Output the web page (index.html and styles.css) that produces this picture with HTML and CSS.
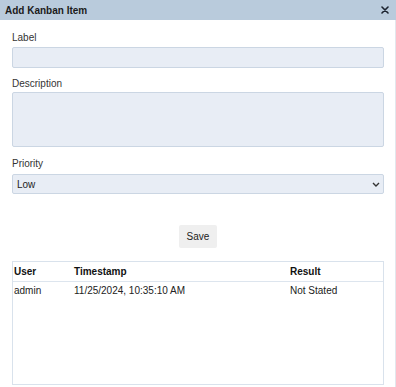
FILE: index.html
```html
<!DOCTYPE html>
<html>
<head>
<meta charset="utf-8">
<link rel="stylesheet" href="styles.css">
</head>
<body>
<div class="dialog">
  <div class="titlebar">
    <span class="title">Add Kanban Item</span>
    <svg class="close" width="8" height="8" viewBox="0 0 8 8"><path d="M1 1L7 7M7 1L1 7" stroke="#1c2430" stroke-width="1.6" stroke-linecap="round"/></svg>
  </div>
  <div class="content">
    <div class="field f-label">
      <label class="lbl">Label</label>
      <input class="ctrl input" type="text">
    </div>
    <div class="field f-desc">
      <label class="lbl">Description</label>
      <textarea class="ctrl area"></textarea>
    </div>
    <div class="field f-prio">
      <label class="lbl">Priority</label>
      <div class="select-wrap">
        <select class="ctrl select"><option>Low</option></select>
        <svg class="chev" width="8" height="5" viewBox="0 0 8 5"><path d="M1 1L4 4L7 1" fill="none" stroke="#333" stroke-width="1.4"/></svg>
      </div>
    </div>
    <div class="actions">
      <button class="save">Save</button>
    </div>
    <div class="table">
      <div class="row head">
        <div>User</div><div>Timestamp</div><div>Result</div>
      </div>
      <div class="row">
        <div>admin</div><div>11/25/2024, 10:35:10 AM</div><div>Not Stated</div>
      </div>
    </div>
  </div>
</div>
</body>
</html>
```
FILE: styles.css
```css
html, body {
  margin: 0;
  padding: 0;
  background: #ffffff;
}
body {
  font-family: "Liberation Sans", Arial, sans-serif;
  font-size: 10px;
  color: #333;
}
.dialog {
  width: 396px;
  height: 387px;
  display: flex;
  flex-direction: column;
}
.titlebar {
  height: 20px;
  background: #b9cbdc;
  display: flex;
  align-items: center;
  justify-content: space-between;
  padding: 0 7px 0 5px;
  flex-shrink: 0;
}
.title {
  font-weight: bold;
  color: #1b1b1b;
  font-size: 10px;
}
.close {
  display: block;
}
.content {
  flex: 1;
  border-right: 1px solid #e2e7ed;
  padding: 12px 11px 0 12px;
}
.field {
  display: flex;
  flex-direction: column;
}
.lbl {
  line-height: 12px;
  color: #333;
}
.ctrl {
  box-sizing: border-box;
  width: 372px;
  background: #e8edf5;
  border: 1px solid #cbd6e3;
  border-radius: 2px;
  margin: 0;
  font-family: "Liberation Sans", Arial, sans-serif;
  font-size: 10px;
  color: #222;
  outline: none;
}
.f-label .lbl { margin-bottom: 3px; }
.input { height: 21px; }
.f-desc { margin-top: 10px; }
.f-desc .lbl { margin-bottom: 2px; }
.area { height: 55px; resize: none; }
.f-prio { margin-top: 11px; }
.f-prio .lbl { margin-bottom: 4px; }
.select-wrap {
  position: relative;
  width: 372px;
}
.select {
  appearance: none;
  -webkit-appearance: none;
  height: 20px;
  padding: 0 0 0 4px;
  display: block;
}
.chev {
  position: absolute;
  right: 4px;
  top: 8px;
  pointer-events: none;
}
.actions {
  display: flex;
  justify-content: center;
  width: 372px;
  margin-top: 31px;
}
.save {
  width: 38px;
  height: 23px;
  border: none;
  border-radius: 2px;
  background: #efefef;
  font-family: "Liberation Sans", Arial, sans-serif;
  font-size: 10px;
  color: #222;
  padding: 0;
}
.table {
  margin-top: 13px;
  width: 372px;
  height: 124px;
  box-sizing: border-box;
  border: 1px solid #d9e2ec;
}
.row {
  display: grid;
  grid-template-columns: 60px 216px 1fr;
  padding: 0 0 0 1px;
  line-height: 12px;
  color: #222;
}
.row.head {
  font-weight: bold;
  color: #111;
  height: 20px;
  padding-top: 4px;
  box-sizing: border-box;
  border-bottom: 1px solid #dde5ee;
}
.row.head + .row {
  padding-top: 3px;
}
```
